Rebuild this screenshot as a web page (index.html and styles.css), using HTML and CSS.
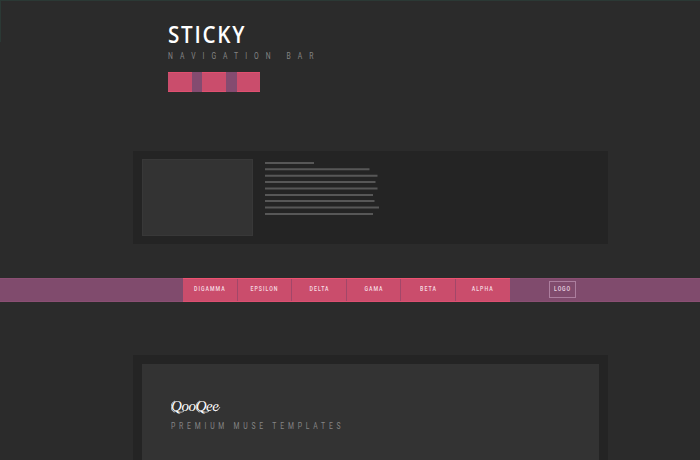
FILE: index.html
```html
<!DOCTYPE html>
<html lang="en">
<head>
<meta charset="utf-8">
<title>Sticky Navigation Bar</title>
<link rel="stylesheet" href="styles.css">
</head>
<body>
<div class="page">
  <header class="intro">
    <h1 class="title">STICKY</h1>
    <p class="subtitle">NAVIGATION BAR</p>
    <div class="swatches"><i></i><i></i></div>
  </header>
  <section class="card">
    <div class="thumb"></div>
    <svg class="lines" width="120" height="60" viewBox="0 0 120 60" stroke="#575757" stroke-width="2">
      <path d="M0 3H49M0 9.2H104.5M0 15.8H112.5M0 22H110.5M0 28.4H112.5M0 34.9H108M0 41.1H109.5M0 47.5H114M0 54H108"/>
    </svg>
  </section>
  <nav class="bar">
    <ul class="menu">
      <li><span>DIGAMMA</span></li><li><span>EPSILON</span></li><li><span>DELTA</span></li><li><span>GAMA</span></li><li><span>BETA</span></li><li><span>ALPHA</span></li>
    </ul>
    <div class="logo"><span>LOGO</span></div>
  </nav>
  <section class="hero">
    <div class="panel">
      <div class="brand">QooQee
        <svg class="swash" width="50" height="18" viewBox="0 0 50 18" fill="none" stroke="#fff" stroke-width=".7">
          <path d="M4 3C-1 5-1 12 3 14M29 3C24 5 24 12 28 14M3 14C8 12 9 16 13 13M28 14C33 12 34 16 38 13M44 13Q47 13 49 9"/>
        </svg>
      </div>
      <p class="tagline">PREMIUM MUSE TEMPLATES</p>
    </div>
  </section>
</div>
</body>
</html>
```
FILE: styles.css
```css
* { box-sizing: border-box; margin: 0; padding: 0; }
body { background: #2b2b2b; font-family: Roboto, "Liberation Sans", sans-serif; }
.page {
  height: 460px;
  overflow: hidden;
  background:
    linear-gradient(#2b3935, #2b3935) 0 0 / 100% 1px no-repeat,
    linear-gradient(#2b3935, #2b3935) 0 0 / 1px 42px no-repeat,
    #2b2b2b;
}
.intro { height: 151px; padding: 19px 0 0 168px; }
.title { font: 600 24px/29px "Open Sans", sans-serif; letter-spacing: 2px; color: #fff; transform: scaleX(.86); transform-origin: 0 0; opacity: .999; }
.subtitle { margin-top: 2px; font-size: 8.5px; line-height: 12px; letter-spacing: 8.8px; color: #858585; transform: scaleX(.8); transform-origin: 0 0; white-space: nowrap; opacity: .999; }
.swatches { display: flex; gap: 24px; width: 92px; height: 20px; margin-top: 10px; padding-left: 24px; background: #ca4d6c; border: 1px solid #e05070; border-width: 1px 0; }
.swatches i { width: 10px; background: #844b70; margin: -1px 0; }
.swatches i + i { width: 11px; }
.card { display: flex; width: 475px; height: 93px; margin-left: 133px; padding: 8px 9px; background: #242424; }
.thumb { width: 111px; height: 77px; background: #333; border: 1px solid #383838; }
.lines { margin: 1px 0 0 12px; display: block; }
.bar { display: flex; align-items: center; height: 24px; margin-top: 34px; padding-left: 183px; background: #804b6d; border-top: 1px solid #8a4f73; border-bottom: 1px solid #8a4f73; }
.menu { display: grid; grid-template-columns: repeat(6, 1fr); width: 327px; height: 24px; list-style: none; background: #ca4d6c; border-top: 1px solid #ed5270; border-bottom: 1px solid #dc4f70; }
.menu li { border-right: 1px solid #a24769; font-size: 6.5px; font-weight: 500; line-height: 20px; letter-spacing: 1.3px; text-align: center; color: #f7dce3; padding-left: 1px; }
.menu li:last-child { border-right-color: transparent; }
.menu span, .logo span { display: inline-block; transform: scaleX(.8); opacity: .999; margin: 0 -5px; }
.logo { width: 27px; height: 17px; margin: 0 0 2px 39px; border: 1px solid #ac7e9e; font-size: 6.5px; font-weight: 500; line-height: 15px; letter-spacing: 1.1px; text-align: center; color: #ead5e3; }
.hero { width: 475px; height: 120px; margin: 53px 0 0 133px; padding: 9px 9px 0; background: #242424; }
.panel { height: 111px; padding: 32px 0 0 29px; background: #333; }
.brand { position: relative; font: italic 15px/20px "Liberation Serif", serif; letter-spacing: -.4px; color: #fff; opacity: .999; }
.swash { position: absolute; left: 0; top: 2px; }
.tagline { margin-top: 4px; font-size: 8.5px; line-height: 12px; letter-spacing: 4.75px; color: #858585; transform: scaleX(.8); transform-origin: 0 0; white-space: nowrap; opacity: .999; }
```
